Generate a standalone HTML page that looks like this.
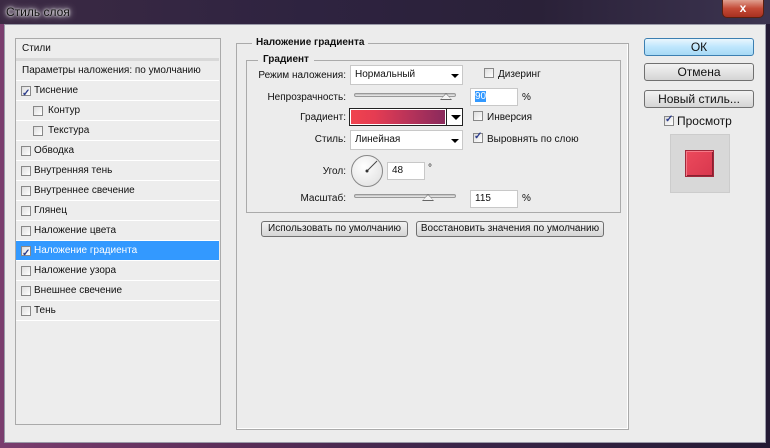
<!DOCTYPE html>
<html><head><meta charset="utf-8"><style>
*{box-sizing:border-box;margin:0;padding:0}
body{width:770px;height:448px;overflow:hidden;font-family:"Liberation Sans",sans-serif;font-size:10px;color:#111;position:relative;
background:linear-gradient(90deg,#7a3d6e 0%,#5a2d58 30%,#3a2448 60%,#241a34 100%)}
.abs{position:absolute;white-space:nowrap}
.title{left:0;top:0;width:770px;height:24px;background:linear-gradient(90deg,#3c2a44,#2e2340 40%,#2a2138 70%,#3c3450);}
.title span{position:absolute;left:6px;top:5px;font-size:12px;color:#111;text-shadow:0 0 8px #fff,0 0 4px #fff,0 0 2px #fff}
.close{left:722px;top:0;width:42px;height:18px;background:linear-gradient(#e0a090,#c44a36 50%,#a83020);border:1px solid #5a2010;border-top:none;border-radius:0 0 5px 5px;color:#fff;font-weight:bold;text-align:center;font-size:12px;line-height:16px}
.dlg{left:4px;top:24px;width:762px;height:419px;background:#ececec;border:1px solid #9a9aa8}
.panel{border:1px solid #aaa;background:#ededed}
.row{position:absolute;left:0;width:203px;height:20px;border-bottom:1px solid #fff;line-height:20px;white-space:nowrap}
.cb{position:absolute;width:10px;height:10px;border:1px solid #888;background:linear-gradient(135deg,#ddd,#fff);top:5px}
.ck::after{content:"✓";position:absolute;left:0;top:-3px;font-size:10px;color:#2a3a8a;font-weight:bold}
.btn{position:absolute;border:1px solid #707070;border-radius:3px;background:linear-gradient(#f2f2f2,#e4e4e4 50%,#d4d4d4);text-align:center;font-size:11px;white-space:nowrap}
.inp{position:absolute;background:#fff;border:1px solid #c8c8c8;height:18px;line-height:16px;padding-left:4px}
.lbl{position:absolute;text-align:right;width:120px}
.arr{position:absolute;width:0;height:0;border-left:4px solid transparent;border-right:4px solid transparent;border-top:4px solid #000}
.track{position:absolute;height:4px;border:1px solid #999;border-radius:2px;background:linear-gradient(#bbb,#eee)}
.thumb{position:absolute;width:0;height:0;border-left:6px solid transparent;border-right:6px solid transparent;border-bottom:7px solid #666}
.thumb::after{content:"";position:absolute;left:-5px;top:1px;border-left:5px solid transparent;border-right:5px solid transparent;border-bottom:5px solid #f4f4f4}
</style></head><body>
<div class="abs title"><span>Стиль слоя</span></div>
<div class="abs close">x</div>
<div class="abs dlg"></div>

<div class="abs panel" style="left:15px;top:38px;width:206px;height:387px">
 <div class="row" style="top:0;border-bottom:3px solid #d8d8d8;height:22px;padding-left:6px">Стили</div>
 <div class="row" style="top:22px;padding-left:6px">Параметры наложения: по умолчанию</div>
 <div class="row" style="top:42px;padding-left:18px"><span class="cb ck" style="left:5px"></span>Тиснение</div>
 <div class="row" style="top:62px;padding-left:32px"><span class="cb" style="left:17px"></span>Контур</div>
 <div class="row" style="top:82px;padding-left:32px"><span class="cb" style="left:17px"></span>Текстура</div>
 <div class="row" style="top:102px;padding-left:18px"><span class="cb" style="left:5px"></span>Обводка</div>
 <div class="row" style="top:122px;padding-left:18px"><span class="cb" style="left:5px"></span>Внутренняя тень</div>
 <div class="row" style="top:142px;padding-left:18px"><span class="cb" style="left:5px"></span>Внутреннее свечение</div>
 <div class="row" style="top:162px;padding-left:18px"><span class="cb" style="left:5px"></span>Глянец</div>
 <div class="row" style="top:182px;padding-left:18px"><span class="cb" style="left:5px"></span>Наложение цвета</div>
 <div class="row" style="top:202px;padding-left:18px;background:#3399ff;color:#fff"><span class="cb ck" style="left:5px"></span>Наложение градиента</div>
 <div class="row" style="top:222px;padding-left:18px"><span class="cb" style="left:5px"></span>Наложение узора</div>
 <div class="row" style="top:242px;padding-left:18px"><span class="cb" style="left:5px"></span>Внешнее свечение</div>
 <div class="row" style="top:262px;padding-left:18px"><span class="cb" style="left:5px"></span>Тень</div>
</div>

<div class="abs" style="left:236px;top:43px;width:393px;height:387px;border:1px solid #aaa;border-top:none;box-shadow:inset -1px -1px 0 #fff"></div>
<div class="abs" style="left:236px;top:43px;width:393px;border-top:1px solid #aaa"></div>
<div class="abs" style="left:252px;top:37px;background:#ececec;padding:0 4px;font-weight:bold">Наложение градиента</div>
<div class="abs" style="left:246px;top:60px;width:375px;height:153px;border:1px solid #aaa"></div>
<div class="abs" style="left:258px;top:54px;background:#ececec;padding:0 5px;font-weight:bold">Градиент</div>

<div class="lbl" style="left:226px;top:70px">Режим наложения:</div>
<div class="inp" style="left:350px;top:65px;width:113px;height:20px;line-height:18px">Нормальный</div><div class="arr" style="left:451px;top:74px"></div>
<div class="cb" style="left:484px;top:68px"></div><div class="abs" style="left:486px;top:69px;padding-left:12px">Дизеринг</div>

<div class="lbl" style="left:226px;top:92px">Непрозрачность:</div>
<div class="track" style="left:354px;top:93px;width:102px"></div><div class="thumb" style="left:440px;top:93px"></div>
<div class="inp" style="left:470px;top:88px;width:48px"><span style="background:#3399ff;color:#fff">90</span></div>
<div class="abs" style="left:522px;top:92px">%</div>

<div class="lbl" style="left:226px;top:112px">Градиент:</div>
<div class="abs" style="left:349px;top:108px;width:114px;height:18px;border:1px solid #222;background:#fff"></div>
<div class="abs" style="left:351px;top:110px;width:94px;height:14px;background:linear-gradient(90deg,#f0434e,#e53c52 25%,#b4325a 65%,#8a2a5c)"></div>
<div class="abs" style="left:446px;top:109px;width:1px;height:16px;background:#222"></div>
<div class="arr" style="left:451px;top:115px;border-width:5px 5px 0"></div>
<div class="cb" style="left:473px;top:111px"></div><div class="abs" style="left:475px;top:112px;padding-left:12px">Инверсия</div>

<div class="lbl" style="left:226px;top:134px">Стиль:</div>
<div class="inp" style="left:350px;top:130px;width:113px;height:20px;line-height:18px">Линейная</div><div class="arr" style="left:451px;top:139px"></div>
<div class="cb ck" style="left:473px;top:133px"></div><div class="abs" style="left:475px;top:134px;padding-left:12px">Выровнять по слою</div>

<div class="lbl" style="left:226px;top:166px">Угол:</div>
<div class="abs" style="left:351px;top:155px;width:32px;height:32px;border-radius:50%;border:1px solid #888;background:radial-gradient(circle at 40% 35%,#fff,#ddd)"></div>
<svg class="abs" style="left:351px;top:155px" width="32" height="32"><line x1="16" y1="16" x2="26" y2="6" stroke="#444" stroke-width="1"/><circle cx="16" cy="16" r="1.5" fill="#333"/></svg>
<div class="inp" style="left:387px;top:162px;width:38px">48</div>
<div class="abs" style="left:428px;top:163px">°</div>

<div class="lbl" style="left:226px;top:193px">Масштаб:</div>
<div class="track" style="left:354px;top:194px;width:102px"></div><div class="thumb" style="left:422px;top:194px"></div>
<div class="inp" style="left:470px;top:190px;width:48px">115</div>
<div class="abs" style="left:522px;top:193px">%</div>

<div class="btn" style="left:261px;top:221px;width:147px;height:16px;line-height:14px;font-size:10px">Использовать по умолчанию</div>
<div class="btn" style="left:416px;top:221px;width:188px;height:16px;line-height:14px;font-size:10px">Восстановить значения по умолчанию</div>

<div class="btn" style="left:644px;top:38px;width:110px;height:18px;line-height:16px;border-color:#3c7fb1;background:linear-gradient(#eaf6fd,#bee6fd 50%,#a7d9f5);font-size:12px">ОК</div>
<div class="btn" style="left:644px;top:63px;width:110px;height:18px;line-height:16px;font-size:12px">Отмена</div>
<div class="btn" style="left:644px;top:90px;width:110px;height:18px;line-height:16px;font-size:12px">Новый стиль...</div>
<div class="cb ck" style="left:664px;top:116px"></div><div class="abs" style="left:677px;top:114px;font-size:12px">Просмотр</div>
<div class="abs" style="left:670px;top:134px;width:60px;height:59px;background:#d8d8d8;border:1px solid #ccc"></div>
<div class="abs" style="left:685px;top:150px;width:29px;height:27px;background:linear-gradient(135deg,#ec4a5c,#d8374e);border:1px solid #a0283a;box-shadow:inset 1px 1px 0 #f47a88,inset -1px -1px 0 #8a2030"></div>
</body></html>
